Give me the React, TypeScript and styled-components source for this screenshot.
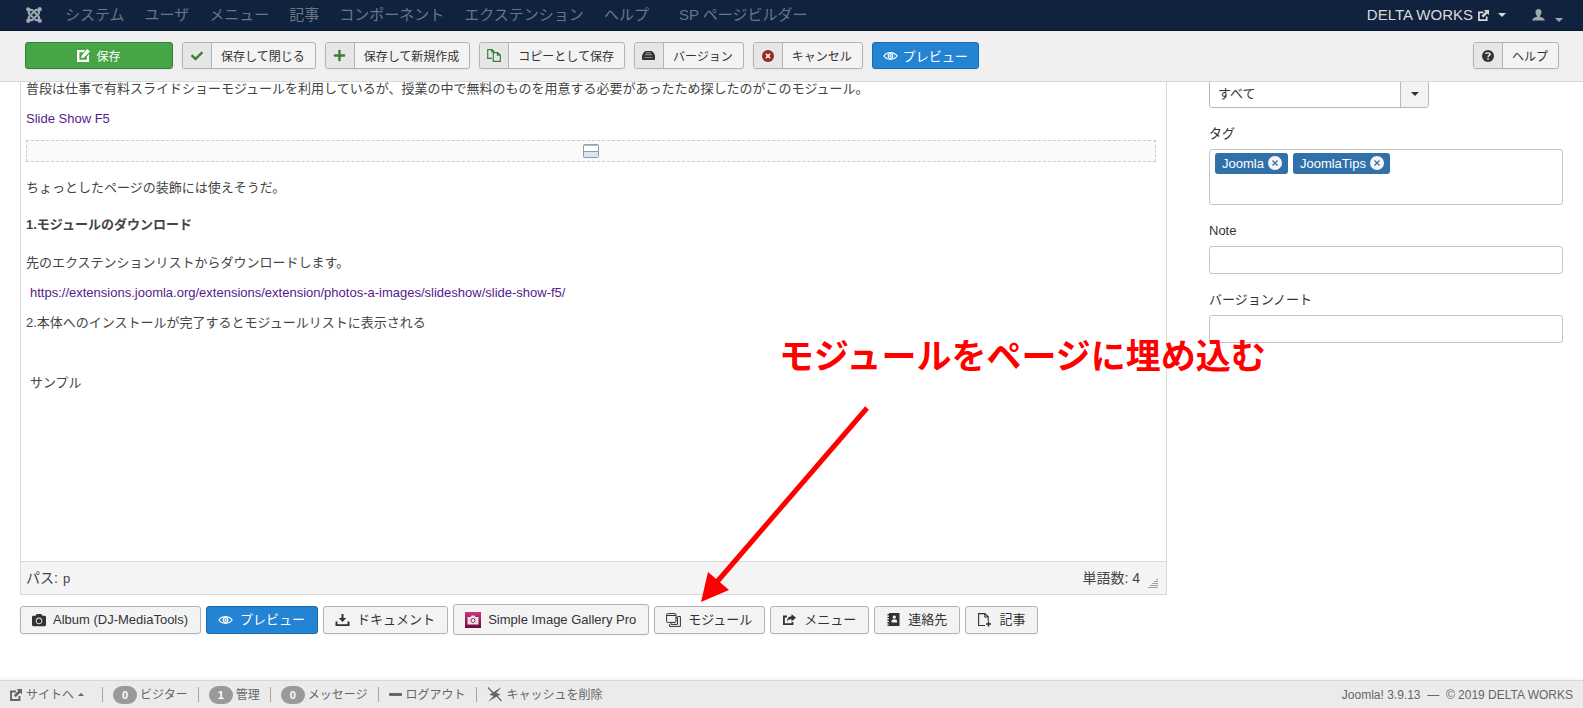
import React from 'react';
import styled, { createGlobalStyle, css } from 'styled-components';
import { FaJoomla, FaCheck, FaPlus, FaCamera } from 'react-icons/fa';

const GlobalStyle = createGlobalStyle`
  *, *::before, *::after { box-sizing: border-box; }
  body {
    margin: 0;
    background: #fff;
    color: #333;
    font-family: "Liberation Sans", "Noto Sans CJK JP", sans-serif;
    font-size: 13px;
    line-height: 20px;
  }
  a { text-decoration: none; }
  button, input, select { font: inherit; color: inherit; }
  svg { flex: none; display: block; }
`;

const Page = styled.div`
  position: relative;
  display: flex;
  flex-direction: column;
  min-height: 100vh;
`;

const NavBar = styled.header`
  display: flex;
  align-items: center;
  height: 31px;
  padding: 0 20px 0 25px;
  background: #10223e;
  border-bottom: 1px solid #0b182c;
  font-size: 15px;
`;
const Brand = styled.a`
  display: flex;
  width: 30px;
  color: #9fa7b2;
`;
const Menu = styled.nav`
  display: flex;
  flex: 1;
  white-space: nowrap;
`;
const MenuLink = styled.a<{ $apart?: boolean }>`
  padding: 0 10px;
  margin-left: ${p => (p.$apart ? '10px' : '0')};
  color: #6b7686;
`;
const SiteLink = styled.a`
  display: flex;
  align-items: center;
  gap: 5px;
  color: #d9d9d9;
`;
const UserLink = styled.a`
  display: flex;
  align-items: center;
  gap: 10px;
  margin-left: 26px;
  color: #9fa7b2;
`;
const caretBase = css`
  width: 0;
  height: 0;
  border: 4px solid transparent;
`;
const Caret = styled.span`
  ${caretBase}
  border-top-color: currentColor;
  border-bottom: 0;
  margin-left: 4px;
`;
const UserCaret = styled.span`
  ${caretBase}
  border-top-color: currentColor;
  border-bottom: 0;
  margin-top: 10px;
`;
const UpCaret = styled.span`
  ${caretBase}
  border-width: 3px;
  border-bottom-color: currentColor;
  border-top: 0;
  margin-right: 8px;
`;

const Toolbar = styled.div`
  display: flex;
  align-items: flex-start;
  gap: 9px;
  padding: 11px 24px 12px 25px;
  background: #f0f0f0;
  border-bottom: 1px solid #d8d8d8;
  font-size: 12px;
`;
const Spacer = styled.span`
  flex: 1;
`;
const buttonBase = css`
  display: inline-flex;
  align-items: center;
  padding: 0;
  border: 1px solid #b3b3b3;
  border-radius: 3px;
  background: #f3f3f3;
  box-shadow: 0 1px 2px rgba(0, 0, 0, 0.05);
  white-space: nowrap;
  cursor: pointer;
`;
const SaveButton = styled.button`
  ${buttonBase}
  justify-content: center;
  gap: 6px;
  width: 148px;
  height: 27px;
  background: #46a546;
  border-color: #378137;
  color: #fff;
`;
const ToolButton = styled.button`
  ${buttonBase}
  height: 27px;
  padding-right: 10px;
  overflow: hidden;
`;
const ToolIcon = styled.span<{ $color?: string }>`
  display: flex;
  align-items: center;
  justify-content: center;
  width: 29px;
  height: 25px;
  margin-right: 9px;
  background: #e6e6e6;
  border-right: 1px solid #b3b3b3;
  color: ${p => p.$color ?? '#333'};
`;
const ToolLabel = styled.span`
  padding-top: 2px;
`;
const PreviewButton = styled.button`
  ${buttonBase}
  gap: 5px;
  height: 27px;
  padding: 0 10px;
  background: #2384d3;
  border-color: #1a6bb0;
  color: #fff;
  font-size: 13px;
`;

const Main = styled.main`
  flex: 1;
  display: flex;
  overflow: hidden;
  padding: 0 20px;
`;
const Columns = styled.div`
  flex: 1;
  display: grid;
  grid-template-columns: minmax(0, 1147fr) minmax(0, 354fr);
  gap: 42px;
  margin-top: -3px;
`;
const EditorColumn = styled.section`
  display: flex;
  flex-direction: column;
  padding-bottom: 45px;
`;
const EditorFrame = styled.div`
  flex: 1;
  display: flex;
  flex-direction: column;
  border: 1px solid #d8d8d8;
  border-top: 0;
`;
const Article = styled.div`
  flex: 1;
  padding: 0 10px 20px 5px;
  color: #444;
  p { margin: 0 0 10px; }
  h4 { margin: 17px 0 18px; font-size: 13px; line-height: 20px; }
  a { color: #551a8b; }
`;
const Indented = styled.p`
  padding-left: 4px;
`;
const ReadMore = styled.div`
  display: flex;
  align-items: center;
  justify-content: center;
  height: 22px;
  margin: 11px 0 16px;
  border: 1px dashed #ccc;
  background: #fafafa;
`;
const StatusBar = styled.div`
  display: flex;
  align-items: center;
  justify-content: space-between;
  height: 33px;
  padding: 0 8px 0 5px;
  background: #f4f4f4;
  border-top: 1px solid #d8d8d8;
  color: #444;
  font-size: 14px;
`;
const PathItem = styled.span`
  margin-left: 5px;
  font-size: 13px;
`;
const WordCount = styled.span`
  display: flex;
  align-items: center;
  gap: 8px;
  svg { margin-top: 10px; }
`;
const InsertBar = styled.div`
  display: flex;
  flex-wrap: wrap;
  align-items: center;
  gap: 5px;
  margin-top: 9px;
`;
const InsertButton = styled.button<{ $primary?: boolean; $tall?: boolean }>`
  ${buttonBase}
  gap: 7px;
  height: ${p => (p.$tall ? 31 : 28)}px;
  padding: 0 12px 0 11px;
  ${p => p.$primary && css`
    background: #2384d3;
    border-color: #1a6bb0;
    color: #fff;
  `}
`;

const Sidebar = styled.aside`
  padding-top: 1px;
`;
const Field = styled.div`
  margin-bottom: 16px;
`;
const Label = styled.label`
  display: block;
  margin-bottom: 5px;
`;
const SelectBox = styled.div`
  display: flex;
  align-items: center;
  width: 220px;
  height: 28px;
  border: 1px solid #b8b8b8;
  border-radius: 3px;
  overflow: hidden;
`;
const Select = styled.select`
  flex: 1;
  min-width: 0;
  height: 26px;
  padding: 0 8px;
  appearance: none;
  border: 0;
  background: #fff;
`;
const SelectArrow = styled.span`
  display: flex;
  align-items: center;
  justify-content: center;
  width: 28px;
  height: 26px;
  padding-right: 4px;
  border-left: 1px solid #b8b8b8;
  background: #f3f3f3;
`;
const TextInput = styled.input`
  display: block;
  width: 100%;
  height: 28px;
  padding: 4px 6px;
  border: 1px solid #c4c4c4;
  border-radius: 3px;
  background: #fff;
`;
const TagBox = styled.div`
  display: flex;
  align-items: flex-start;
  gap: 5px;
  height: 56px;
  padding: 3px 5px;
  border: 1px solid #c4c4c4;
  border-radius: 3px;
`;
const Tag = styled.span`
  display: flex;
  align-items: center;
  gap: 4px;
  height: 21px;
  padding: 0 6px 0 7px;
  border-radius: 3px;
  background: #3071a9;
  color: #fff;
`;
const TagRemove = styled.button`
  display: flex;
  padding: 0 0 2px;
  border: 0;
  background: none;
  cursor: pointer;
`;
const TagInput = styled.input`
  flex: 1;
  min-width: 0;
  border: 0;
  outline: 0;
  background: none;
`;

const Footer = styled.footer`
  display: flex;
  align-items: center;
  height: 28px;
  padding: 0 10px;
  background: #ebebeb;
  border-top: 1px solid #d8d8d8;
  box-shadow: 0 -2px 3px rgba(0, 0, 0, 0.04);
  color: #666;
  font-size: 12px;
  white-space: nowrap;
`;
const FooterItem = styled.a`
  display: flex;
  align-items: center;
  gap: 4px;
  color: inherit;
  & + &::before {
    content: "";
    width: 1px;
    height: 15px;
    margin: 0 6px 0 10px;
    background: #a6a6a6;
  }
`;
const Badge = styled.span`
  width: 24px;
  height: 18px;
  border-radius: 9px;
  background: #999;
  color: #fff;
  font-size: 11px;
  font-weight: 700;
  line-height: 18px;
  text-align: center;
`;
const BadgeLabel = styled.span`
  display: flex;
  gap: 3px;
  align-items: center;
`;
const Credits = styled.span`
  margin-left: auto;
  white-space: pre;
`;

const Callout = styled.strong`
  position: absolute;
  left: 779px;
  top: 329px;
  color: #f00;
  font-family: "Noto Sans CJK JP", sans-serif;
  font-size: 35px;
  line-height: 50px;
  white-space: nowrap;
  pointer-events: none;
`;
const CalloutArrow = styled.svg`
  position: absolute;
  left: 690px;
  top: 400px;
  pointer-events: none;
`;

const EditIcon = () => (
  <svg width="13" height="13" viewBox="0 0 14 14" fill="currentColor" aria-hidden="true">
    <path fillRule="evenodd" d="M0 1h9L7 3.500H2.600v8h8V8L13 5.500V14H0zM11 0l3 2.800-6.500 6.400L4.500 10l.8-3.300z" />
  </svg>
);
const OutIcon = ({ size = 12 }: { size?: number }) => (
  <svg width={size} height={size} viewBox="0 0 12 12" aria-hidden="true">
    <path d="M6 2.500H1v8.500h8.500V7" fill="none" stroke="currentColor" strokeWidth="1.900" />
    <path d="M6.500 0H12v5.500L10.200 3.700 5.700 8.200 3.800 6.300l4.500-4.500z" fill="currentColor" />
  </svg>
);
const CopyIcon = () => (
  <svg width="14" height="13" viewBox="0 0 14 13" fill="none" stroke="currentColor" strokeWidth="1.200" aria-hidden="true">
    <path d="M5 9.400H.7V.7h4.500l2 2V4M4.800.7v2.300h2.400M6.300 3.700h4.500l2.500 2.300v6.300h-7zM10.400 3.700v2.500h2.900" />
  </svg>
);
const DriveIcon = () => (
  <svg width="13" height="9" viewBox="0 0 13 9" aria-hidden="true">
    <path d="M3.500 0h6c1.500.6 3 2.800 3.500 4.500V8a1 1 0 0 1-1 1H1a1 1 0 0 1-1-1V4.500C.5 2.800 2 .6 3.500 0z" fill="currentColor" />
    <path d="M3.800 1.800h5.400M3 3.700h7" stroke="#b5b5b5" strokeWidth=".8" />
    <path d="M2.500 6.500h8" stroke="#e6e6e6" strokeWidth=".5" />
  </svg>
);
const CancelIcon = () => (
  <svg width="12" height="12" viewBox="0 0 12 12" aria-hidden="true">
    <circle cx="6" cy="6" r="6" fill="currentColor" />
    <path d="M3.800 3.800l4.400 4.400M8.200 3.800L3.800 8.200" stroke="#fff" strokeWidth="1.600" />
  </svg>
);
const HelpIcon = () => (
  <svg width="12" height="12" viewBox="0 0 13 13" aria-hidden="true">
    <circle cx="6.500" cy="6.500" r="6.500" fill="currentColor" />
    <path d="M4 4.200c0-1.400 4.800-1.600 4.800.4 0 1.500-2.200 1.200-2.200 3.200" stroke="#eee" strokeWidth="1.600" fill="none" />
    <path d="M5.700 9h1.700v1.600H5.700z" fill="#eee" />
  </svg>
);
const EyeIcon = () => (
  <svg width="15" height="10" viewBox="0 0 15 10" fill="none" stroke="currentColor" strokeWidth="1.200" aria-hidden="true">
    <path d="M.9 5C4 .6 11 .6 14.100 5 11 9.400 4 9.400.9 5z" />
    <circle cx="7.500" cy="5" r="2.300" />
    <circle cx="7.500" cy="5" r=".5" />
  </svg>
);
const PersonIcon = () => (
  <svg width="13" height="12" viewBox="0 0 13 12" fill="currentColor" aria-hidden="true">
    <path d="M6.500 0c2 0 3 1.300 3 3.200 0 1.600-.7 2.800-1.500 3.500v1.100c2.300.5 4.500 1.300 4.800 3.700H.2C.5 9.100 2.700 8.300 5 7.800V6.700C4.200 6 3.500 4.800 3.500 3.200 3.500 1.300 4.500 0 6.500 0z" />
  </svg>
);
const PageBreakIcon = () => (
  <svg width="16" height="14" viewBox="0 0 16 14" aria-hidden="true">
    <rect x=".5" y=".5" width="15" height="13" rx="1" fill="#fff" stroke="#999" />
    <path d="M1 1.500h14" stroke="#bbb" />
    <path d="M1 8h14v5H1z" fill="#d6e6f8" />
    <path d="M1 7.500h14" stroke="#999" />
  </svg>
);
const GripIcon = () => (
  <svg width="10" height="10" viewBox="0 0 10 10" stroke="#a5a08f" aria-hidden="true">
    <path d="M8 1.500h2M6 3.500h4M4 5.500h6M2 7.500h8M0 9.500h10" />
  </svg>
);
const DownloadIcon = () => (
  <svg width="15" height="12" viewBox="0 0 15 12" fill="currentColor" aria-hidden="true">
    <path d="M6.500 0h2v4h2.800L7.500 8 3.700 4h2.800zM.5 7.500h2v2.700h10V7.500h2V12H.5z" />
  </svg>
);
const GalleryIcon = () => (
  <svg width="16" height="16" viewBox="0 0 16 16" aria-hidden="true">
    <defs>
      <linearGradient id="gallery" x1="0" y1="0" x2="0" y2="1">
        <stop offset="0" stopColor="#c9357c" />
        <stop offset="1" stopColor="#6b0a3b" />
      </linearGradient>
    </defs>
    <rect width="16" height="16" fill="url(#gallery)" />
    <path d="M2.500 5h3l1-1.500h3l1 1.500h3v7.500h-11z" fill="#ecdfe6" />
    <circle cx="8" cy="8.500" r="2" fill="#fff" stroke="#8d2458" />
  </svg>
);
const ModuleIcon = () => (
  <svg width="15" height="14" viewBox="0 0 15 14" fill="none" stroke="currentColor" aria-hidden="true">
    <rect x=".6" y=".6" width="9.400" height="8.800" rx="1" />
    <path d="M.6 2.500H10M10 4.500h1.500v6.900H5V9.400M11.500 3.500h2.900v9.900H3.500v-2.200" />
  </svg>
);
const ShareIcon = () => (
  <svg width="15" height="12" viewBox="0 0 15 12" aria-hidden="true">
    <path d="M5 2.500H1.900v7.600h8.600V8" fill="none" stroke="currentColor" strokeWidth="1.800" />
    <path d="M9.500 0L14 3.700 9.500 7.400V5.200c-2 0-3.500.6-4.500 2.400C5 4.500 6.500 2.500 9.500 2.300z" fill="currentColor" />
  </svg>
);
const ContactIcon = () => (
  <svg width="15" height="13" viewBox="0 0 15 13" fill="currentColor" aria-hidden="true">
    <path fillRule="evenodd" d="M3 0h10.500v13H3zM8.300 2.500a1.600 1.600 0 1 0 .01 0zM5.600 9.500H11V7.800c0-.8-1-1.200-2.700-1.200s-2.700.4-2.700 1.200z" />
    <path d="M1.500 1H3v1.600H1.500zM1.500 3.700H3v1.600H1.500zM1.500 6.400H3V8H1.500zM1.500 9.100H3v1.600H1.500zM1.500 11.500H3V13H1.500z" />
  </svg>
);
const NewFileIcon = () => (
  <svg width="15" height="14" viewBox="0 0 15 14" fill="none" stroke="currentColor" aria-hidden="true">
    <path d="M8 12.500H1.600V.6h6.400l3.200 3.200V8M7.800.6V4h3.400" strokeWidth="1.100" />
    <path d="M11.500 8.500v5M9 11h5" strokeWidth="1.500" />
  </svg>
);
const FlashIcon = () => (
  <svg width="16" height="15" viewBox="0 0 16 15" fill="currentColor" aria-hidden="true">
    <path d="M14.800 0L9.200 6l4.300 1.200L1 14.700 6.500 9 2.200 7.800z" />
    <path d="M1 .5L7 7M9.500 8.500l5 5.500" stroke="currentColor" strokeWidth="1.200" />
  </svg>
);
const RemoveIcon = () => (
  <svg width="14" height="14" viewBox="0 0 14 14" aria-hidden="true">
    <circle cx="7" cy="7" r="7" fill="#f5f5f5" />
    <path d="M4.500 4.500l5 5M9.500 4.500l-5 5" stroke="#3071a9" strokeWidth="1.300" />
  </svg>
);
const MinusIcon = () => (
  <svg width="13" height="3" viewBox="0 0 13 3" aria-hidden="true">
    <rect width="13" height="3" rx="1" fill="currentColor" />
  </svg>
);

const menuItems = ['システム', 'ユーザ', 'メニュー', '記事', 'コンポーネント', 'エクステンション', 'ヘルプ'];

const toolItems = [
  { label: '保存して閉じる', icon: <FaCheck size={12} />, color: '#378137' },
  { label: '保存して新規作成', icon: <FaPlus size={13} />, color: '#378137' },
  { label: 'コピーとして保存', icon: <CopyIcon />, color: '#378137' },
  { label: 'バージョン', icon: <DriveIcon />, color: '#333' },
  { label: 'キャンセル', icon: <CancelIcon />, color: '#942a25' },
];

const insertItems = [
  { label: 'Album (DJ-MediaTools)', icon: <FaCamera size={14} /> },
  { label: 'プレビュー', icon: <EyeIcon />, primary: true },
  { label: 'ドキュメント', icon: <DownloadIcon /> },
  { label: 'Simple Image Gallery Pro', icon: <GalleryIcon />, tall: true },
  { label: 'モジュール', icon: <ModuleIcon /> },
  { label: 'メニュー', icon: <ShareIcon /> },
  { label: '連絡先', icon: <ContactIcon /> },
  { label: '記事', icon: <NewFileIcon /> },
];

const counters = [
  { count: 0, label: 'ビジター' },
  { count: 1, label: '管理' },
  { count: 0, label: 'メッセージ' },
];

export default function App() {
  return (
    <Page lang="ja">
      <GlobalStyle />
      <NavBar>
        <Brand href="#" aria-label="Joomla!"><FaJoomla size={18} /></Brand>
        <Menu>
          {menuItems.map(item => <MenuLink key={item} href="#">{item}</MenuLink>)}
          <MenuLink href="#" $apart>SP ページビルダー</MenuLink>
        </Menu>
        <SiteLink href="#">DELTA WORKS <OutIcon size={11} /><Caret /></SiteLink>
        <UserLink href="#" aria-label="User menu"><PersonIcon /><UserCaret /></UserLink>
      </NavBar>

      <Toolbar>
        <SaveButton><EditIcon /><ToolLabel>保存</ToolLabel></SaveButton>
        {toolItems.map(item => (
          <ToolButton key={item.label}>
            <ToolIcon $color={item.color}>{item.icon}</ToolIcon>
            <ToolLabel>{item.label}</ToolLabel>
          </ToolButton>
        ))}
        <PreviewButton><EyeIcon /><ToolLabel>プレビュー</ToolLabel></PreviewButton>
        <Spacer />
        <ToolButton>
          <ToolIcon><HelpIcon /></ToolIcon>
          <ToolLabel>ヘルプ</ToolLabel>
        </ToolButton>
      </Toolbar>

      <Main>
        <Columns>
          <EditorColumn>
            <EditorFrame>
              <Article>
                <p>普段は仕事で有料スライドショーモジュールを利用しているが、授業の中で無料のものを用意する必要があったため探したのがこのモジュール。</p>
                <p><a href="#">Slide Show F5</a></p>
                <ReadMore><PageBreakIcon /></ReadMore>
                <p>ちょっとしたページの装飾には使えそうだ。</p>
                <h4>1.モジュールのダウンロード</h4>
                <p>先のエクステンションリストからダウンロードします。</p>
                <Indented><a href="#">https://extensions.joomla.org/extensions/extension/photos-a-images/slideshow/slide-show-f5/</a></Indented>
                <p>2.本体へのインストールが完了するとモジュールリストに表示される</p>
                <p>&nbsp;</p>
                <Indented>サンプル</Indented>
              </Article>
              <StatusBar>
                <span>パス:<PathItem>p</PathItem></span>
                <WordCount>単語数: 4 <GripIcon /></WordCount>
              </StatusBar>
            </EditorFrame>
            <InsertBar>
              {insertItems.map(item => (
                <InsertButton key={item.label} $primary={item.primary} $tall={item.tall}>
                  {item.icon}
                  {item.label}
                </InsertButton>
              ))}
            </InsertBar>
          </EditorColumn>

          <Sidebar>
            <Field>
              <SelectBox>
                <Select aria-label="言語" defaultValue="all">
                  <option value="all">すべて</option>
                </Select>
                <SelectArrow><Caret /></SelectArrow>
              </SelectBox>
            </Field>
            <Field>
              <Label htmlFor="tags">タグ</Label>
              <TagBox>
                {['Joomla', 'JoomlaTips'].map(tag => (
                  <Tag key={tag}>
                    {tag}
                    <TagRemove aria-label={`${tag} ×`}><RemoveIcon /></TagRemove>
                  </Tag>
                ))}
                <TagInput id="tags" />
              </TagBox>
            </Field>
            <Field>
              <Label htmlFor="note">Note</Label>
              <TextInput id="note" />
            </Field>
            <Field>
              <Label htmlFor="version-note">バージョンノート</Label>
              <TextInput id="version-note" />
            </Field>
          </Sidebar>
        </Columns>
      </Main>

      <Footer>
        <FooterItem href="#"><OutIcon />サイトへ<UpCaret /></FooterItem>
        {counters.map(item => (
          <FooterItem key={item.label} href="#">
            <BadgeLabel><Badge>{item.count}</Badge>{item.label}</BadgeLabel>
          </FooterItem>
        ))}
        <FooterItem href="#"><MinusIcon />ログアウト</FooterItem>
        <FooterItem href="#"><FlashIcon />キャッシュを削除</FooterItem>
        <Credits>Joomla! 3.9.13  —  © 2019 DELTA WORKS</Credits>
      </Footer>

      <Callout>モジュールをページに埋め込む</Callout>
      <CalloutArrow width="190" height="210" viewBox="690 400 190 210" aria-hidden="true">
        <path d="M867 408L716 583" stroke="#f00" strokeWidth="5" />
        <path d="M701 602L708 572L729 590z" fill="#f00" />
      </CalloutArrow>
    </Page>
  );
}
